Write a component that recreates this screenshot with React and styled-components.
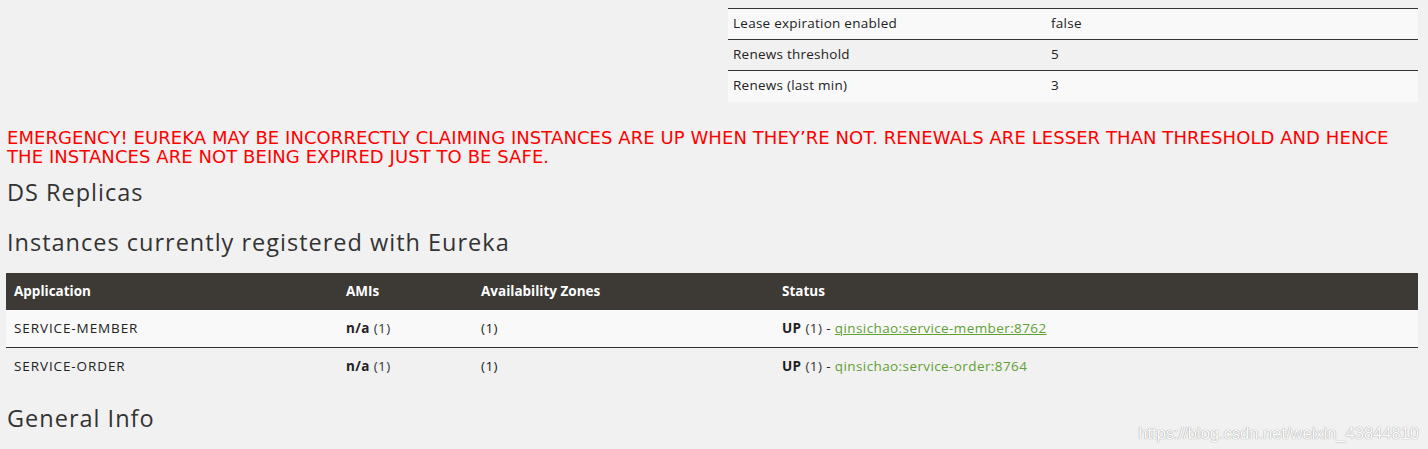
import React from 'react'
import styled, { createGlobalStyle } from 'styled-components'

const Global = createGlobalStyle`
  html, body {
    margin: 0;
    padding: 0;
    background: #f1f1f1;
  }
  body {
    font-family: "Open Sans", "Liberation Sans", sans-serif;
    color: #333;
    font-size: 13px;
  }
`

const Page = styled.div`
  position: relative;
  padding: 8px 10px 0 6px;
  height: 449px;
  box-sizing: border-box;
  overflow: hidden;
`

const TopRow = styled.div`
  display: grid;
  grid-template-columns: 1fr 690px;
  column-gap: 32px;
`

const InfoTable = styled.table`
  width: 100%;
  border-collapse: collapse;
  font-size: 13.5px;
  letter-spacing: 0.25px;
`

const InfoRow = styled.tr`
  background: ${p => (p.$odd ? '#f9f9f9' : '#f1f1f1')};
  border-top: 1px solid #333;
  td {
    height: 31px;
    box-sizing: border-box;
    padding: 0 5px 3px;
    vertical-align: middle;
    color: #222;
  }
  td:first-child {
    width: 318px;
  }
`

const Alert = styled.h4`
  margin: 26px 0 0 1px;
  color: #ff0000;
  font-family: "DejaVu Sans", "Open Sans", sans-serif;
  font-size: 18px;
  font-weight: 400;
  line-height: 19px;
  text-transform: uppercase;
  letter-spacing: 0.07px;
`

const Heading = styled.h1`
  margin: ${p => p.$top}px 0 0 1px;
  font-size: 23.5px;
  font-weight: 400;
  line-height: 28px;
  color: #333;
  letter-spacing: 1px;
`

const Grid = styled.table`
  width: 100%;
  margin-top: 17px;
  border-collapse: collapse;
  font-size: 13.5px;
`

const Head = styled.thead`
  background: #3d3934;
  th {
    height: 37px;
    padding: 0 8px;
    text-align: left;
    color: #fff;
    font-weight: 700;
    font-size: 13.5px;
  }
`

const Row = styled.tr`
  background: ${p => (p.$odd ? '#f9f9f9' : '#f1f1f1')};
  border-bottom: ${p => (p.$odd ? '1px solid #333' : 'none')};
  td {
    height: ${p => (p.$odd ? 37 : 36)}px;
    padding: 0 8px;
    color: #222;
    letter-spacing: 0.4px;
  }
`

const AppName = styled.td`
  && {
    font-weight: 500;
    letter-spacing: 0.9px;
  }
`

const Bold = styled.b`
  font-weight: 700;
  color: #222;
`

const Count = styled.span`
  color: #333;
`

const Link = styled.a`
  color: #5fa132;
  text-decoration: ${p => (p.$underline ? 'underline' : 'none')};
`

const Mark = styled.div`
  position: absolute;
  right: 9px;
  bottom: 6px;
  font-family: "Liberation Sans", Arial, sans-serif;
  font-size: 16.5px;
  color: #fdfdfd;
  text-shadow: 0 0 1px #9a9a9a, 0 0 1px #b0b0b0;
`

const info = [
  ['Lease expiration enabled', 'false'],
  ['Renews threshold', '5'],
  ['Renews (last min)', '3'],
]

const apps = [
  { name: 'SERVICE-MEMBER', link: 'qinsichao:service-member:8762' },
  { name: 'SERVICE-ORDER', link: 'qinsichao:service-order:8764' },
]

const App = () => {
  return (
    <Page>
      <Global />
      <TopRow>
        <div />
        <InfoTable>
          <tbody>
            {info.map((r, i) => (
              <InfoRow key={r[0]} $odd={i % 2 === 0}>
                <td>{r[0]}</td>
                <td>{r[1]}</td>
              </InfoRow>
            ))}
          </tbody>
        </InfoTable>
      </TopRow>
      <Alert>
        Emergency! Eureka may be incorrectly claiming instances are up when they’re not. Renewals are lesser than threshold and hence the instances are not being expired just to be safe.
      </Alert>
      <Heading $top={12}>DS Replicas</Heading>
      <Heading $top={22}>Instances currently registered with Eureka</Heading>
      <Grid>
        <Head>
          <tr>
            <th style={{ width: 316 }}>Application</th>
            <th style={{ width: 119 }}>AMIs</th>
            <th style={{ width: 285 }}>Availability Zones</th>
            <th>Status</th>
          </tr>
        </Head>
        <tbody>
          {apps.map((a, i) => (
            <Row key={a.name} $odd={i === 0}>
              <AppName>{a.name}</AppName>
              <td><Bold>n/a</Bold> <Count>(1)</Count></td>
              <td>(1)</td>
              <td>
                <Bold>UP</Bold> <Count>(1)</Count> - <Link href="#" $underline={i === 0}>{a.link}</Link>
              </td>
            </Row>
          ))}
        </tbody>
      </Grid>
      <Heading $top={20}>General Info</Heading>
      <Mark>https://blog.csdn.net/weixin_43844810</Mark>
    </Page>
  )
}

export default App
